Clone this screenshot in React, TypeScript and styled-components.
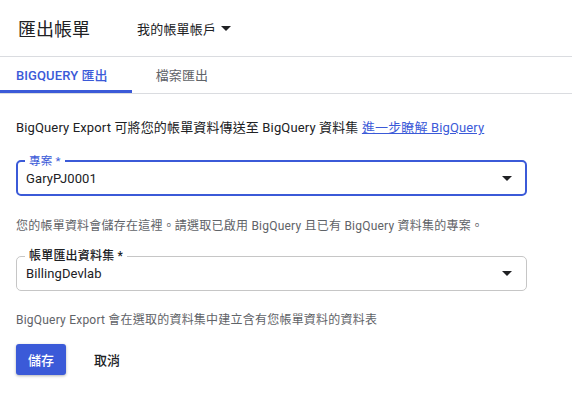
import React from "react";
import styled, { createGlobalStyle } from "styled-components";

const BLUE = "#3b5ad8";

const GlobalStyle = createGlobalStyle`
  html, body {
    margin: 0;
    padding: 0;
    background: #ffffff;
  }
  body {
    font-family: Roboto, "Noto Sans CJK TC", sans-serif;
    color: #202124;
    -webkit-font-smoothing: antialiased;
  }
  * { box-sizing: border-box; }
`;

const Page = styled.div`
  width: 572px;
  height: 412px;
  overflow: hidden;
`;

const Header = styled.header`
  height: 57px;
  display: flex;
  align-items: center;
  padding: 0 0 0 18px;
  border-bottom: 1px solid #dadce0;
`;

const Title = styled.h1`
  margin: 0;
  font-size: 18px;
  font-weight: 400;
  width: 119px;
  color: #202124;
`;

const AccountPicker = styled.button`
  display: flex;
  align-items: center;
  gap: 5px;
  border: none;
  background: none;
  padding: 0;
  font-family: inherit;
  font-size: 13px;
  letter-spacing: 0.2px;
  color: #202124;
  cursor: pointer;
`;

const Caret = styled.span<{ $size?: number }>`
  display: inline-block;
  width: 0;
  height: 0;
  border-left: ${(p) => p.$size ?? 5}px solid transparent;
  border-right: ${(p) => p.$size ?? 5}px solid transparent;
  border-top: ${(p) => p.$size ?? 5}px solid #202124;
`;

const TabBar = styled.nav`
  height: 37px;
  display: flex;
  border-bottom: 1px solid #dadce0;
  margin-left: -8px;
`;

const Tab = styled.div<{ $active?: boolean }>`
  display: flex;
  align-items: center;
  padding: 2px 24px 0;
  font-size: 13px;
  font-weight: ${(p) => (p.$active ? 500 : 400)};
  letter-spacing: 0.1px;
  color: ${(p) => (p.$active ? BLUE : "#5f6368")};
  border-bottom: 3px solid ${(p) => (p.$active ? BLUE : "transparent")};
  cursor: pointer;
`;

const Content = styled.section`
  padding: 25px 16px 0 16px;
`;

const Intro = styled.p`
  margin: 0;
  font-size: 13px;
  line-height: 18px;
  letter-spacing: 0.14px;
  color: #202124;

  a {
    color: ${BLUE};
    text-decoration: underline;
  }
`;

const Field = styled.fieldset<{ $focused?: boolean }>`
  margin: 0;
  width: 511px;
  height: 41px;
  padding: 0 ${(p) => (p.$focused ? 13 : 14)}px 0 ${(p) => (p.$focused ? 8 : 9)}px;
  border: ${(p) => (p.$focused ? `2px solid ${BLUE}` : "1px solid #c6c6c6")};
  border-radius: 5px;
  display: flex;
  align-items: center;
  justify-content: space-between;
`;

const Legend = styled.legend<{ $focused?: boolean }>`
  padding: 0 4px;
  margin-left: -1px;
  font-size: ${(p) => (p.$focused ? 11.5 : 12)}px;
  font-weight: ${(p) => (p.$focused ? 400 : 500)};
  line-height: 12px;
  letter-spacing: 0.2px;
  color: ${(p) => (p.$focused ? BLUE : "#202124")};
`;

const Value = styled.span<{ $shift: number }>`
  font-size: 13px;
  letter-spacing: 0.1px;
  color: #202124;
  margin-top: ${(p) => p.$shift}px;
`;

const Arrow = styled.span<{ $shift: number }>`
  margin-top: ${(p) => p.$shift}px;
  display: flex;
`;

const Hint = styled.p`
  margin: 0;
  font-size: 12px;
  line-height: 16px;
  letter-spacing: 0.22px;
  color: #5f6368;
`;

const Actions = styled.div`
  display: flex;
  gap: 16px;
`;

const Button = styled.button<{ $primary?: boolean }>`
  width: 50px;
  height: 31px;
  border: none;
  border-radius: 3px;
  font-family: inherit;
  font-size: 13px;
  font-weight: 500;
  color: ${(p) => (p.$primary ? "#ffffff" : "#202124")};
  background: ${(p) => (p.$primary ? BLUE : "transparent")};
  box-shadow: ${(p) =>
    p.$primary ? "0 1px 3px rgba(0,0,0,0.3)" : "none"};
  cursor: pointer;
`;

const Spacer = styled.div<{ $h: number }>`
  height: ${(p) => p.$h}px;
`;

function Select({
  label,
  value,
  focused,
}: {
  label: string;
  value: string;
  focused?: boolean;
}) {
  const shift = focused ? -5 : -6;
  return (
    <Field $focused={focused}>
      <Legend $focused={focused}>{label}</Legend>
      <Value $shift={shift}>{value}</Value>
      <Arrow $shift={shift}>
        <Caret />
      </Arrow>
    </Field>
  );
}

export default function App() {
  return (
    <>
      <GlobalStyle />
      <Page>
        <Header>
          <Title>匯出帳單</Title>
          <AccountPicker>
            我的帳單帳戶 <Caret />
          </AccountPicker>
        </Header>
        <TabBar>
          <Tab $active>BIGQUERY 匯出</Tab>
          <Tab>檔案匯出</Tab>
        </TabBar>
        <Content>
          <Intro>
            BigQuery Export 可將您的帳單資料傳送至 BigQuery 資料集{" "}
            <a href="#">進一步瞭解 BigQuery</a>
          </Intro>
          <Spacer $h={18} />
          <Select label="專案 *" value="GaryPJ0001" focused />
          <Spacer $h={22} />
          <Hint>
            您的帳單資料會儲存在這裡。請選取已啟用 BigQuery 且已有 BigQuery
            資料集的專案。
          </Hint>
          <Spacer $h={16} />
          <Select label="帳單匯出資料集 *" value="BillingDevlab" />
          <Spacer $h={21} />
          <Hint>BigQuery Export 會在選取的資料集中建立含有您帳單資料的資料表</Hint>
          <Spacer $h={16} />
          <Actions>
            <Button $primary>儲存</Button>
            <Button>取消</Button>
          </Actions>
        </Content>
      </Page>
    </>
  );
}
